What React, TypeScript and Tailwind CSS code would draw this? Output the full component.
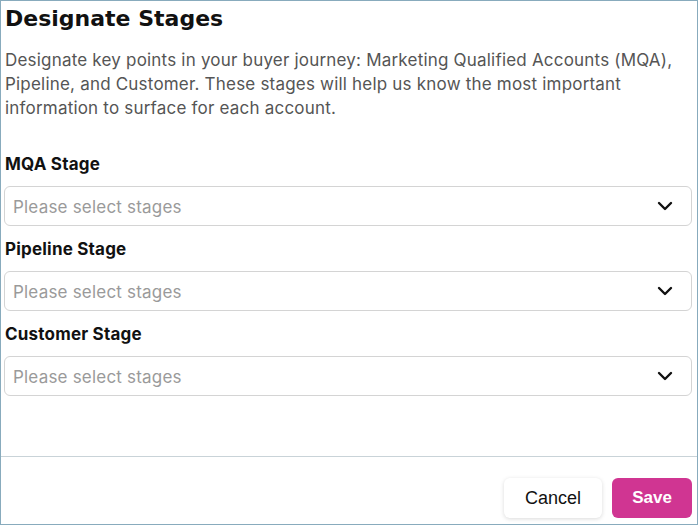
import React from 'react';

const stages = ['MQA Stage', 'Pipeline Stage', 'Customer Stage'];

const Chevron = () => (
  <svg width="16" height="10" viewBox="0 0 16 10" fill="none" stroke="#111" strokeWidth="2.4" strokeLinecap="round" strokeLinejoin="round">
    <path d="M2 2l6 6 6-6" />
  </svg>
);

export default function App() {
  return (
    <div className="w-[698px] h-[525px] border border-[#88abbd] bg-white flex flex-col font-['Inter',sans-serif]">
      <div className="flex-1 pl-[3px] pr-[5px]">
        {/* Title + intro */}
        <h1 className="mt-[2px] pl-[1px] text-[22px] leading-[32px] font-bold text-[#111] font-['DejaVu_Sans',sans-serif]">
          Designate Stages
        </h1>
        <p className="mt-[13px] pl-[1px] text-[17px] tracking-[0.2px] leading-[24px] text-[#555]">
          Designate key points in your buyer journey: Marketing Qualified Accounts (MQA), Pipeline, and Customer. These stages will help us know the most important information to surface for each account.
        </p>

        {/* Stage selects */}
        <div className="mt-[32px] flex flex-col gap-[11px]">
          {stages.map((label) => (
            <div key={label}>
              <div className="pl-[1px] text-[17px] tracking-[0.2px] leading-[24px] font-bold text-[#111]">{label}</div>
              <div className="mt-[10px] h-[40px] border border-[#d4d4d4] rounded-md flex items-center justify-between pl-[8px] pr-[18px]">
                <span className="pt-[3px] text-[17px] tracking-[0.2px] text-[#9a9a9a]">Please select stages</span>
                <Chevron />
              </div>
            </div>
          ))}
        </div>
      </div>

      {/* Footer actions */}
      <div className="border-t border-[#c9d3d8] flex justify-end gap-[10px] pt-[21px] pb-[6px] pr-[5px]">
        <button className="h-[40px] w-[98px] rounded-md bg-white shadow-[0_1px_4px_rgba(0,0,0,0.15)] text-[18px] text-[#111] font-['Liberation_Sans',sans-serif]">
          Cancel
        </button>
        <button className="h-[40px] w-[80px] rounded-md bg-[#d03592] text-[17px] font-bold text-white font-['Liberation_Sans',sans-serif]">
          Save
        </button>
      </div>
    </div>
  );
}
